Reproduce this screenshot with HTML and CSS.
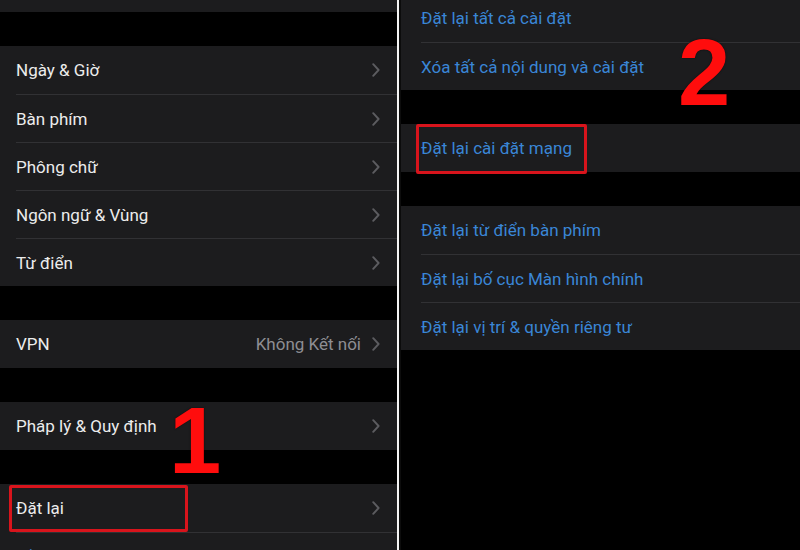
FILE: index.html
```html
<!DOCTYPE html>
<html lang="vi">
<head>
<meta charset="utf-8">
<title>Cài đặt - Đặt lại</title>
<link rel="stylesheet" href="styles.css">
</head>
<body>
<div class="screen">
  <section class="panel panel-left">
    <div class="group stub"></div>

    <div class="group">
      <div class="row"><div class="row-inner"><span class="label">Ngày &amp; Giờ</span><span class="chev"><svg viewBox="0 0 8 14" width="8" height="14"><polyline points="1.2,1.2 6.6,7 1.2,12.8"/></svg></span></div></div>
      <div class="row"><div class="row-inner"><span class="label">Bàn phím</span><span class="chev"><svg viewBox="0 0 8 14" width="8" height="14"><polyline points="1.2,1.2 6.6,7 1.2,12.8"/></svg></span></div></div>
      <div class="row"><div class="row-inner"><span class="label">Phông chữ</span><span class="chev"><svg viewBox="0 0 8 14" width="8" height="14"><polyline points="1.2,1.2 6.6,7 1.2,12.8"/></svg></span></div></div>
      <div class="row"><div class="row-inner"><span class="label">Ngôn ngữ &amp; Vùng</span><span class="chev"><svg viewBox="0 0 8 14" width="8" height="14"><polyline points="1.2,1.2 6.6,7 1.2,12.8"/></svg></span></div></div>
      <div class="row"><div class="row-inner"><span class="label">Từ điển</span><span class="chev"><svg viewBox="0 0 8 14" width="8" height="14"><polyline points="1.2,1.2 6.6,7 1.2,12.8"/></svg></span></div></div>
    </div>

    <div class="group">
      <div class="row"><div class="row-inner"><span class="label">VPN</span><span class="value">Không Kết nối</span><span class="chev"><svg viewBox="0 0 8 14" width="8" height="14"><polyline points="1.2,1.2 6.6,7 1.2,12.8"/></svg></span></div></div>
    </div>

    <div class="group">
      <div class="row"><div class="row-inner"><span class="label">Pháp lý &amp; Quy định</span><span class="chev"><svg viewBox="0 0 8 14" width="8" height="14"><polyline points="1.2,1.2 6.6,7 1.2,12.8"/></svg></span></div></div>
    </div>

    <div class="group">
      <div class="row"><div class="row-inner"><span class="label">Đặt lại</span><span class="chev"><svg viewBox="0 0 8 14" width="8" height="14"><polyline points="1.2,1.2 6.6,7 1.2,12.8"/></svg></span></div></div>
      <div class="row"><div class="row-inner"><span class="label link">Tắt máy</span></div></div>
    </div>

    <div class="highlight hl-left"></div>
    <div class="step step-1">1</div>
  </section>

  <div class="divider"></div>

  <section class="panel panel-right">
    <div class="group first">
      <div class="row"><div class="row-inner"><span class="label link">Đặt lại tất cả cài đặt</span></div></div>
      <div class="row"><div class="row-inner"><span class="label link">Xóa tất cả nội dung và cài đặt</span></div></div>
    </div>

    <div class="group">
      <div class="row"><div class="row-inner"><span class="label link">Đặt lại cài đặt mạng</span></div></div>
    </div>

    <div class="group">
      <div class="row"><div class="row-inner"><span class="label link">Đặt lại từ điển bàn phím</span></div></div>
      <div class="row"><div class="row-inner"><span class="label link">Đặt lại bố cục Màn hình chính</span></div></div>
      <div class="row"><div class="row-inner"><span class="label link">Đặt lại vị trí &amp; quyền riêng tư</span></div></div>
    </div>

    <div class="highlight hl-right"></div>
    <div class="step step-2">2</div>
  </section>
</div>
</body>
</html>
```

FILE: styles.css
```css
* { box-sizing: border-box; }

html, body {
  margin: 0;
  padding: 0;
  background: #000;
}

body {
  width: 800px;
  height: 550px;
  overflow: hidden;
  font-family: Roboto, "Noto Sans", "Liberation Sans", sans-serif;
  font-size: 17px;
  color: #ececec;
}

.screen {
  display: flex;
  width: 800px;
  height: 550px;
}

.panel {
  position: relative;
  display: flex;
  flex-direction: column;
  gap: 34px;
  overflow: hidden;
}

.panel-left { width: 397px; }
.panel-right { flex: 1; }

.divider {
  width: 4px;
  background: #f4f4f4;
  border-right: 2px solid #0c0c0c;
}

.group {
  background: #1c1c1e;
  flex-shrink: 0;
}

.group.stub { height: 12px; }
.panel-right .group.first { margin-top: -6px; }

.row { padding-left: 16px; }

.row-inner {
  height: 48px;
  display: flex;
  align-items: center;
  padding-right: 17px;
}

.row + .row .row-inner { border-top: 1px solid #313134; }

.label { flex: 1; white-space: nowrap; }

.link { color: #3a86d6; }

.value {
  color: #8e8e93;
  margin-right: 11px;
}

.chev { display: flex; }
.chev svg polyline {
  fill: none;
  stroke: #5c5c60;
  stroke-width: 1.9;
  stroke-linecap: round;
  stroke-linejoin: round;
}

.panel-right .row { padding-left: 20px; }

.highlight {
  position: absolute;
  border: 3px solid #d8141c;
  border-radius: 2px;
}

.hl-left { left: 9px; top: 485px; width: 179px; height: 47px; }
.hl-right { left: 15px; top: 124px; width: 171px; height: 50px; }

.step {
  position: absolute;
  font-family: "Liberation Sans", Arial, sans-serif;
  font-weight: bold;
  font-size: 94px;
  line-height: 1;
  color: #ff0d0d;
  text-shadow: 0 0 2px rgba(0,0,0,0.6);
}

.step-1 { left: 169px; top: 394px; }
.step-2 { left: 277px; top: 26px; }
```
